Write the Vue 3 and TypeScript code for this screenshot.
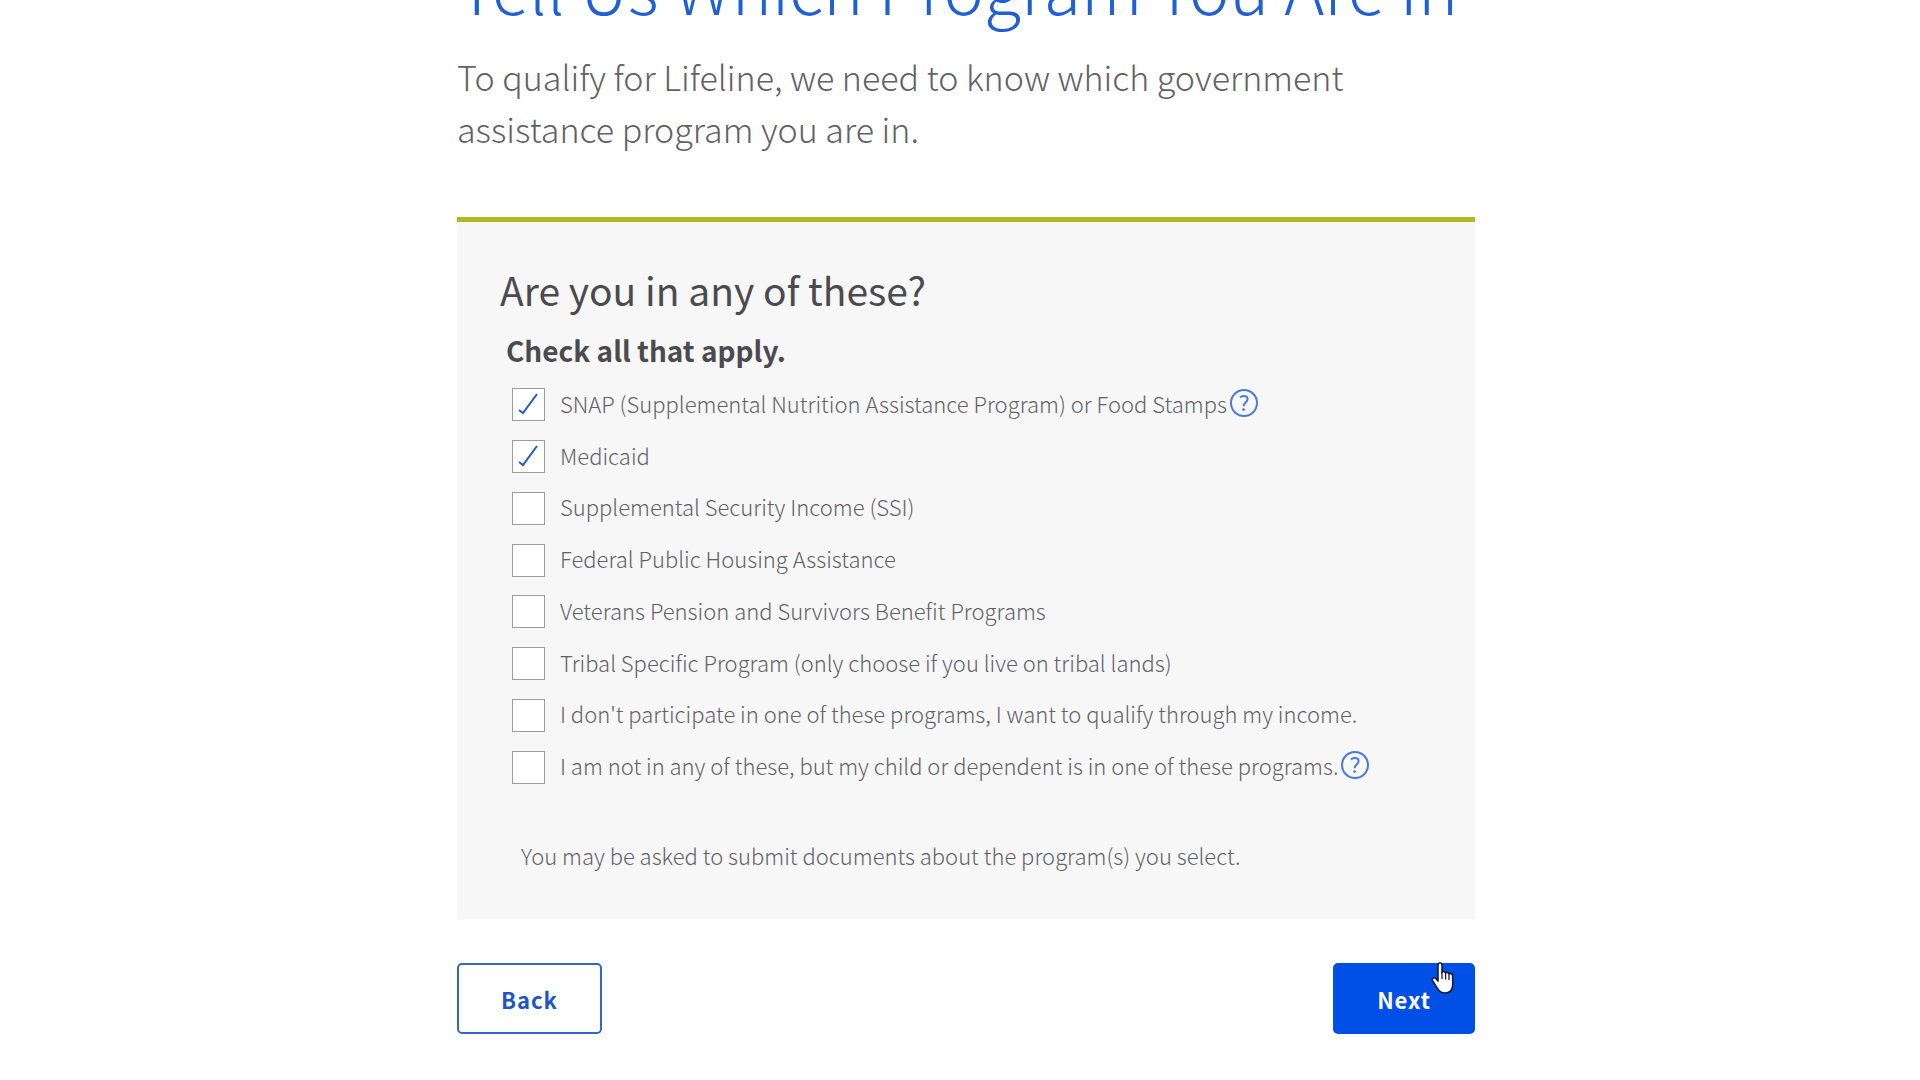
<script setup lang="ts">
import { ref } from 'vue'

interface Program {
  id: string
  label: string
  help?: boolean
}

const programs: Program[] = [
  { id: 'snap', label: 'SNAP (Supplemental Nutrition Assistance Program) or Food Stamps', help: true },
  { id: 'medicaid', label: 'Medicaid' },
  { id: 'ssi', label: 'Supplemental Security Income (SSI)' },
  { id: 'housing', label: 'Federal Public Housing Assistance' },
  { id: 'veterans', label: 'Veterans Pension and Survivors Benefit Programs' },
  { id: 'tribal', label: 'Tribal Specific Program (only choose if you live on tribal lands)' },
  { id: 'income', label: "I don't participate in one of these programs, I want to qualify through my income." },
  { id: 'dependent', label: 'I am not in any of these, but my child or dependent is in one of these programs.', help: true },
]

const selected = ref<string[]>(['snap', 'medicaid'])
</script>

<template>
  <div class="page">
    <main class="content">
      <h1 class="title">Tell Us Which Program You Are In</h1>
      <p class="intro">To qualify for Lifeline, we need to know which government assistance program you are in.</p>

      <form class="form" @submit.prevent>
        <section class="panel">
          <h2 class="question">Are you in any of these?</h2>
          <fieldset class="choices">
            <legend class="legend">Check all that apply.</legend>
            <div class="options">
              <div v-for="p in programs" :key="p.id" class="option">
                <input :id="p.id" v-model="selected" class="box" type="checkbox" :value="p.id" />
                <label class="label" :for="p.id">{{ p.label }}</label>
                <button v-if="p.help" class="help" type="button" aria-label="More information">
                  <svg viewBox="0 0 28 28" width="28" height="28" fill="none" stroke="currentColor">
                    <circle cx="14" cy="14" r="13" stroke-width="2" />
                    <path d="M10 8.500c1-1.100 2.300-1.600 3.800-1.600 2.300 0 3.800 1.200 3.800 3.200 0 3.200-4 3.600-4 7.100" stroke-width="2" />
                    <circle cx="13.600" cy="20.600" r="1.400" fill="currentColor" stroke="none" />
                  </svg>
                </button>
              </div>
            </div>
          </fieldset>
          <p class="note">You may be asked to submit documents about the program(s) you select.</p>
        </section>

        <div class="actions">
          <button class="btn back" type="button">Back</button>
          <button class="btn next" type="submit">
            Next
            <svg class="pointer" viewBox="0 0 24 32" width="24" height="32" aria-hidden="true">
              <path
                d="M7 3.200C7 1.800 7.900 1 9 1s2 .8 2 2.200v7.300c.3-.7 1-1 1.700-1 1 0 1.700.6 1.900 1.500.4-.4.900-.6 1.500-.6 1 0 1.700.6 1.900 1.500.3-.3.800-.5 1.300-.5 1.400 0 2.300 1 2.300 2.400 0 0 .4 8.200-.1 11.200-.6 3.600-3.500 6-7.500 6-3.600 0-5.700-1.500-7.400-4.300L1.700 19c-.7-1.200-.5-2.300.4-2.900 1-.6 2.100-.3 2.900.6l2 2.400z"
                fill="#fff"
                stroke="#141c33"
                stroke-width="1.600"
                stroke-linejoin="round"
              />
              <path d="M11 10.500v6M14.600 11.500v5.500M18 12.500v5" stroke="#141c33" stroke-width="1.300" fill="none" stroke-linecap="round" />
            </svg>
          </button>
        </div>
      </form>
    </main>
  </div>
</template>

<style>
body {
  margin: 0;
  background: #fff;
}
</style>

<style scoped>
.page {
  box-sizing: border-box;
  min-height: 100vh;
  overflow: hidden;
  padding: 0 24px 44px 36px;
  font-family: 'Noto Sans CJK SC', 'Noto Sans', sans-serif;
  font-weight: 300;
  color: #626266;
}

/* The page is scrolled so that the title meets the top edge */
.content {
  max-width: 1018px;
  margin: -54px auto 0;
}

.title {
  margin: 0;
  font-size: 68px;
  line-height: 80px;
  font-weight: 300;
  white-space: nowrap;
  color: #2060d4;
}

.intro {
  max-width: 960px;
  margin: 25px 0 62px;
  font-size: 34px;
  line-height: 52px;
}

.panel {
  padding: 37px 43px 48px;
  border-top: 5px solid #afb920;
  background: #f7f7f7;
}

.question {
  margin: 0;
  font-size: 39px;
  line-height: 60px;
  font-weight: 400;
  color: #4b4b4f;
}

.choices {
  min-width: 0;
  margin: 0;
  padding: 0 0 0 6px;
  border: 0;
}

.legend {
  padding: 2px 0 0;
  font-size: 28px;
  line-height: 58px;
  font-weight: 700;
  color: #4b4b4f;
}

.options {
  display: grid;
  grid-auto-rows: 1fr;
  min-height: 414px;
  padding-left: 6px;
}

.option {
  display: flex;
  align-items: center;
}

.box {
  flex: none;
  box-sizing: border-box;
  width: 33px;
  height: 33px;
  margin: 0 15px 0 0;
  appearance: none;
  border: 1px solid #9c9c9c;
  background: #fff;
}

.box:checked {
  background: #fff url("data:image/svg+xml,%3Csvg xmlns='http://www.w3.org/2000/svg' viewBox='0 0 31 31'%3E%3Cpath d='M6 21l4 3L24 5' fill='none' stroke='%231f5bc9' stroke-width='2'/%3E%3C/svg%3E") center / 31px 31px no-repeat;
}

.label,
.note {
  font-size: 22px;
  line-height: 32px;
}

.label,
.help {
  padding: 0 0 4px;
}

.help {
  display: flex;
  margin: 0 0 0 3px;
  border: 0;
  background: none;
  color: #4a7ae0;
}

.note {
  margin: 46px 0 0;
  padding-left: 21px;
}

.actions {
  display: flex;
  justify-content: space-between;
  margin-top: 44px;
}

.btn {
  position: relative;
  box-sizing: border-box;
  height: 71px;
  padding: 0 42px;
  border: 2px solid #2f67cb;
  border-radius: 5px;
  font-family: inherit;
  font-size: 22px;
  line-height: 32px;
  font-weight: 700;
  letter-spacing: 1px;
}

.back {
  background: #fff;
  color: #1f56c4;
}

.next {
  border-color: #0050e8;
  background: #0050e8;
  color: #fff;
}

.pointer {
  position: absolute;
  top: -3px;
  right: 18px;
}
</style>
